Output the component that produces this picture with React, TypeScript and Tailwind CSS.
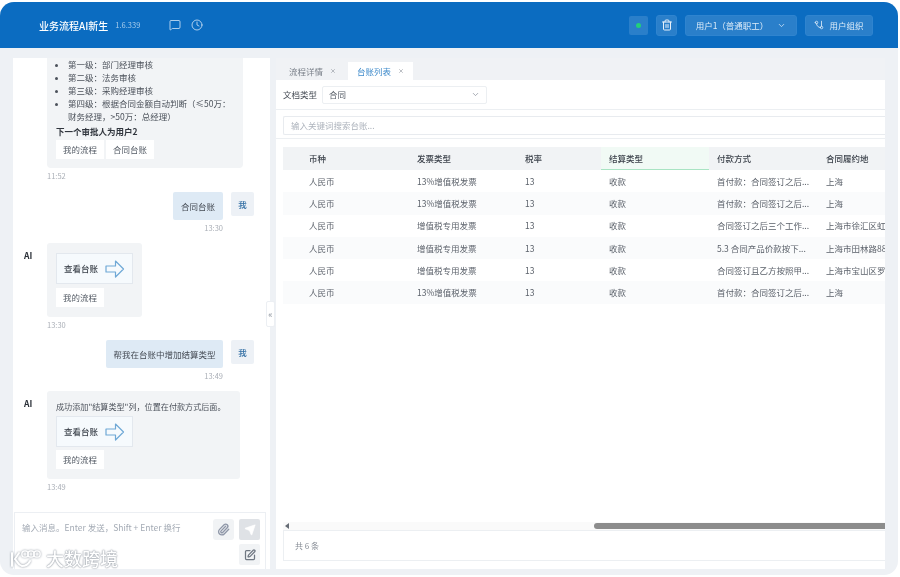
import { ChevronDown, Clock, GitBranch, MessageSquare, Paperclip, Send, SquarePen, Trash2, X } from "lucide-react";

const font = { fontFamily: '"Noto Sans CJK SC", "Noto Sans", sans-serif' };

const rows = [
  ["人民币", "13%增值税发票", "13", "收款", "首付款：合同签订之后...", "上海"],
  ["人民币", "13%增值税发票", "13", "收款", "首付款：合同签订之后...", "上海"],
  ["人民币", "增值税专用发票", "13", "收款", "合同签订之后三个工作...", "上海市徐汇区虹"],
  ["人民币", "增值税专用发票", "13", "收款", "5.3 合同产品价款按下...", "上海市田林路88"],
  ["人民币", "增值税专用发票", "13", "收款", "合同签订且乙方按照甲...", "上海市宝山区罗"],
  ["人民币", "13%增值税发票", "13", "收款", "首付款：合同签订之后...", "上海"],
];

const gridCols = "grid grid-cols-[108px_108px_84px_108px_109px_1fr] pl-[18px]";

function Chip({ children }: { children: string }) {
  return <div className="flex h-[19px] w-[48px] items-center justify-center bg-white text-[8.5px] text-[#555c66]">{children}</div>;
}

function LedgerCard() {
  return (
    <div className="flex h-[31px] w-[77px] items-center gap-[7px] border border-[#e3e8ee] bg-[#f6fafd] pl-[7px] text-[8.5px] font-medium text-[#3c424b]">
      <span>查看台账</span>
      <svg viewBox="0 0 20 18" className="h-[18px] w-[20px]" fill="none" stroke="#6fa8d6" strokeWidth="1.2">
        <path d="M1 6h9.5V1l8 8-8 8v-5H1z" strokeLinejoin="round" />
      </svg>
    </div>
  );
}

function Time({ children, right }: { children: string; right?: boolean }) {
  return <div className={right ? "mt-[3px] mr-[47px] text-right text-[7.5px] leading-[10px] text-[#a9aeb6]" : "mt-[3px] ml-[34px] text-[7.5px] leading-[10px] text-[#a9aeb6]"}>{children}</div>;
}

function UserMessage({ text, width, time }: { text: string; width: string; time: string }) {
  return (
    <div>
      <div className="flex justify-end gap-[8px] pr-[16px]">
        <div className={`flex h-[28px] items-center justify-center rounded-[2px] bg-[#deeaf5] text-[8.5px] text-[#454b54] ${width}`}>{text}</div>
        <div className="flex h-[24px] w-[23px] items-center justify-center rounded-[2px] bg-[#edf1f6] text-[8.5px] font-medium text-[#2f6da3]">我</div>
      </div>
      <Time right>{time}</Time>
    </div>
  );
}

function AiLabel() {
  return <div className="w-[34px] pl-[11px] pt-[6px] text-[8.5px] font-bold leading-[12px] text-[#2b3038]">AI</div>;
}

function Chat() {
  return (
    <div className="flex-1 overflow-hidden">
      <div className="ml-[34px] w-[196px] rounded-b-[4px] bg-[#f2f4f6] pb-[9px] pl-[9px] pr-[6px] text-[8.5px] leading-[13px] text-[#4b515a]">
        <ul className="list-disc pl-[12px]">
          <li>第一级：部门经理审核</li>
          <li>第二级：法务审核</li>
          <li>第三级：采购经理审核</li>
          <li>第四级：根据合同金额自动判断（≤50万：财务经理，&gt;50万：总经理）</li>
        </ul>
        <div className="mt-[2px] font-bold text-[#30353d]">下一个审批人为用户2</div>
        <div className="mt-[2px] flex gap-[2px]">
          <Chip>我的流程</Chip>
          <Chip>合同台账</Chip>
        </div>
      </div>
      <Time>11:52</Time>
      <div className="mt-[11px]">
        <UserMessage text="合同台账" width="w-[50px]" time="13:30" />
      </div>
      <div className="mt-[10px] flex">
        <AiLabel />
        <div className="flex w-[95px] flex-col gap-[4px] rounded-[3px] bg-[#f2f4f6] px-[9px] py-[10px]">
          <LedgerCard />
          <Chip>我的流程</Chip>
        </div>
      </div>
      <Time>13:30</Time>
      <div className="mt-[10px]">
        <UserMessage text="帮我在台账中增加结算类型" width="w-[117px]" time="13:49" />
      </div>
      <div className="mt-[10px] flex">
        <AiLabel />
        <div className="flex w-[193px] flex-col gap-[3px] rounded-[3px] bg-[#f2f4f6] px-[9px] pb-[10px] pt-[9px]">
          <div className="whitespace-nowrap text-[8.1px] leading-[13px] text-[#4b515a]">成功添加"结算类型"列，位置在付款方式后面。</div>
          <LedgerCard />
          <Chip>我的流程</Chip>
        </div>
      </div>
      <Time>13:49</Time>
    </div>
  );
}

function Composer() {
  return (
    <div className="ml-px mr-[4px] flex h-[57px] justify-between border border-b-0 border-[#eceff3] pl-[7px] pr-[5px] pt-[6px]">
      <div className="pt-[2px] text-[8.5px] leading-[12px] text-[#a4abb5]">输入消息。Enter 发送，Shift + Enter 换行</div>
      <div className="flex gap-[5px]">
        <div className="flex h-[21px] w-[21px] items-center justify-center rounded-[3px] bg-[#f1f3f5] text-[#8f97a8]">
          <Paperclip size={13} strokeWidth={2.5} />
        </div>
        <div className="flex w-[21px] flex-col gap-[4px]">
          <div className="flex h-[21px] w-[21px] items-center justify-center rounded-[2px] bg-[#dfe2e6] text-white">
            <Send size={12} strokeWidth={1.5} fill="#ffffff" />
          </div>
          <div className="flex h-[21px] w-[21px] items-center justify-center rounded-[2px] bg-[#f1f3f5] text-[#6f7782]">
            <SquarePen size={12} strokeWidth={2.5} />
          </div>
        </div>
      </div>
    </div>
  );
}

function TableBlock() {
  return (
    <div className="ml-[7px] flex min-h-0 flex-1 flex-col">
      <div className="flex-1 overflow-hidden">
        <div className="mt-[8px] text-[8.5px]">
          <div className={`${gridCols} h-[23px] items-stretch bg-[#f1f3f5] font-medium text-[#3d434c]`}>
            {["币种", "发票类型", "税率", "结算类型", "付款方式", "合同履约地"].map((h, i) => (
              <div key={h} className={i === 3 ? "flex items-center whitespace-nowrap border-b border-[#a9e4c3] bg-[#f1faf5] pl-[8px]" : "flex items-center whitespace-nowrap pl-[8px]"}>{h}</div>
            ))}
          </div>
          {rows.map((r, idx) => (
            <div key={idx} className={`${gridCols} h-[22.3px] items-center text-[#5c626b] ${idx % 2 === 1 ? "bg-[#fafbfc]" : "bg-white"}`}>
              {r.map((c, i) => (
                <div key={i} className="overflow-hidden whitespace-nowrap pl-[8px]">{c}</div>
              ))}
            </div>
          ))}
        </div>
      </div>
      <div className="flex h-[8px] items-center bg-[#fafafa]">
        <div className="ml-[2px] h-0 w-0 border-y-[3px] border-r-[4px] border-y-transparent border-r-[#666c75]" />
        <div className="ml-auto h-[6px] w-[291px] rounded-l-[3px] bg-[#8c8c8c]" />
      </div>
      <div className="flex h-[31px] items-center border-y border-l border-[#eceff2] pl-[11px] text-[8px] text-[#868c95]">共 6 条</div>
      <div className="h-[8px]" />
    </div>
  );
}

function RightPanel() {
  return (
    <div className="flex min-h-0 w-[609px] flex-col bg-white">
      <div className="flex h-[22px] items-end bg-[#f0f2f5] pl-[13px] text-[8.5px]">
        <div className="flex h-[18px] w-[59px] items-center gap-[7px] text-[#7a808a]">
          <span>流程详情</span>
          <X size={6} />
        </div>
        <div className="flex h-[18px] w-[65px] items-center gap-[7px] bg-white pl-[9px] text-[#3f8bcb]">
          <span>台账列表</span>
          <X size={6} className="text-[#7a808a]" />
        </div>
      </div>
      <div className="flex h-[30px] items-center gap-[5px] border-b border-[#eceff2] pl-[7px] text-[8.5px]">
        <span className="text-[#454b54]">文档类型</span>
        <div className="flex h-[18px] w-[165px] items-center justify-between rounded-[2px] border border-[#eceff2] px-[6px] text-[#555c66]">
          <span>合同</span>
          <ChevronDown size={9} className="text-[#8b929c]" />
        </div>
      </div>
      <div className="h-[29px] border-b border-[#eceff2] pl-[7px] pt-[6px]">
        <div className="flex h-[19px] items-center rounded-l-[2px] border border-r-0 border-[#e8ebef] pl-[7px] text-[8.5px] text-[#adb3bc]">输入关键词搜索台账...</div>
      </div>
      <TableBlock />
    </div>
  );
}

function Header() {
  const btn = "flex items-center justify-center rounded-[3px] bg-[#2a7fca] border border-[#2f84cf]";
  return (
    <div className="flex h-[46px] shrink-0 items-center rounded-t-[14px] bg-[#0b6cc1] pl-[39px] pr-[25px] text-white">
      <span className="text-[10px] font-medium">业务流程AI新生</span>
      <span className="ml-[7px] text-[7.5px] text-[#a9cdec]">1.6.339</span>
      <MessageSquare size={12} strokeWidth={1.6} className="ml-[29px] text-[#d5e6f6]" />
      <Clock size={12} strokeWidth={1.6} className="ml-[10px] text-[#d5e6f6]" />
      <div className="ml-auto flex h-[19px] w-[19px] items-center justify-center rounded-[2px] bg-[#2a7fca]">
        <div className="h-[5px] w-[5px] rounded-full bg-[#22d07a]" />
      </div>
      <div className={`${btn} ml-[8px] h-[21px] w-[21px]`}>
        <Trash2 size={12} strokeWidth={2} className="text-[#e6f0fa]" />
      </div>
      <div className={`${btn} ml-[8px] h-[21px] w-[112px] gap-[9px] text-[8.5px] text-[#dcebf8]`}>
        <span>用户1（普通职工）</span>
        <ChevronDown size={9} />
      </div>
      <div className={`${btn} ml-[8px] h-[21px] w-[68px] gap-[5px] text-[8.5px] text-[#dcebf8]`}>
        <GitBranch size={10} className="-scale-x-100" />
        <span>用户组织</span>
      </div>
    </div>
  );
}

export default function App() {
  return (
    <div className="h-[577px] w-[900px] overflow-hidden bg-white pt-[2px] blur-[0.35px]" style={font}>
      <div className="relative flex h-[573px] w-[898px] flex-col rounded-[14px] bg-[#eef1f5]">
        <Header />
        <div className="flex min-h-0 flex-1 pb-[6px] pl-[13px] pt-[10px]">
          <div className="flex w-[257px] flex-col bg-white">
            <Chat />
            <Composer />
          </div>
          <div className="relative w-[6px]">
            <div className="absolute left-[-4px] top-[243px] flex h-[26px] w-[9px] items-center justify-center rounded-[2px] border border-[#eceff3] bg-white text-[9px] leading-none text-[#8b929c]">«</div>
          </div>
          <RightPanel />
        </div>
        <div className="absolute bottom-[3px] left-[8px] flex items-center gap-[4px] text-white [text-shadow:0_0_1px_#8a929c,0_0_2px_#8a929c]">
          <svg viewBox="0 0 34 22" className="h-[22px] w-[34px] [filter:drop-shadow(0_0_1px_#8a929c)]" fill="none" stroke="#fff" strokeWidth="2" strokeLinecap="round">
            <path d="M4 5v13" />
            <path d="M11 5l-4 6c2 2 3 6 7 7 4 0 7-3 8-5" />
            <circle cx="17" cy="6" r="3.2" strokeWidth="1.3" />
            <circle cx="23" cy="6" r="3.2" strokeWidth="1.3" />
            <circle cx="29" cy="6" r="3.2" strokeWidth="1.3" />
          </svg>
          <span className="text-[18px] font-medium">大数跨境</span>
        </div>
      </div>
    </div>
  );
}
